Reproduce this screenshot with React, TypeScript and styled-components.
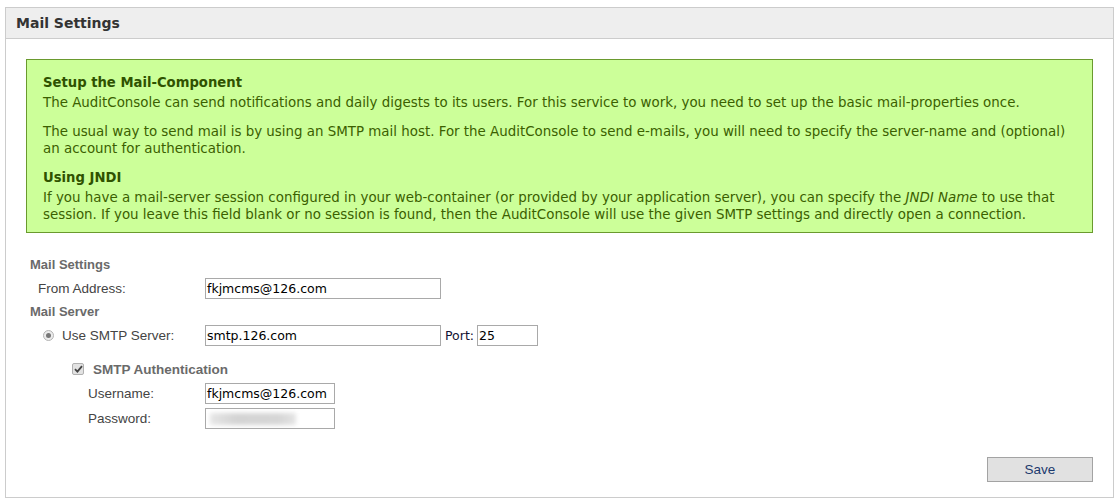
import React from 'react';
import styled, { createGlobalStyle } from 'styled-components';

const GlobalStyle = createGlobalStyle`
  html, body {
    margin: 0;
    padding: 0;
    background: #fff;
  }
`;

const Panel = styled.div`
  margin: 7px 6px 0 5px;
  height: 489px;
  border: 1px solid #cccccc;
  display: flex;
  flex-direction: column;
  font-family: 'DejaVu Sans', Verdana, sans-serif;
`;

const Header = styled.div`
  height: 30px;
  background: #eeeeee;
  border-bottom: 1px solid #cccccc;
  display: flex;
  align-items: center;
  padding-left: 10px;
  font-size: 14px;
  font-weight: bold;
  color: #333;
`;

const Body = styled.div`
  flex: 1;
  padding: 20px 20px 0 20px;
  display: flex;
  flex-direction: column;
`;

const InfoBox = styled.div`
  background: #ccff99;
  border: 1px solid #6a9a2e;
  padding: 14px 16px 9px 16px;
  color: #3b6000;
  font-size: 13.4px;
  line-height: 17px;

  h4 {
    margin: 0 0 3px 0;
    font-size: 13.2px;
    font-weight: bold;
    color: #2f5200;
  }

  p {
    margin: 0 0 12px 0;
  }

  p:last-child {
    margin-bottom: 0;
  }
`;

const Form = styled.div`
  padding-left: 4px;
  margin-top: 23px;
  font-family: 'Liberation Sans', Arial, sans-serif;
  font-size: 13.5px;
  color: #333;
  display: flex;
  flex-direction: column;
`;

const SectionLabel = styled.div<{ $top?: number }>`
  height: 18px;
  line-height: 18px;
  font-size: 13px;
  font-weight: bold;
  color: #6a6a6a;
  margin-top: ${(p) => p.$top ?? 0}px;
`;

const Row = styled.div<{ $top?: number }>`
  display: flex;
  align-items: center;
  height: 21px;
  margin-top: ${(p) => p.$top ?? 0}px;
`;

const LabelCell = styled.div<{ $indent: number }>`
  width: 175px;
  box-sizing: border-box;
  padding-left: ${(p) => p.$indent}px;
  display: flex;
  align-items: center;
  color: #444;
`;

const Field = styled.div<{ $width: number }>`
  width: ${(p) => p.$width}px;
  height: 21px;
  box-sizing: border-box;
  border: 1px solid #a9a9a9;
  padding-left: 1px;
  display: flex;
  align-items: center;
  font-family: 'DejaVu Sans', Tahoma, sans-serif;
  font-size: 12.5px;
  color: #000;
  background: #fff;
  overflow: hidden;
`;

const Blurred = styled.span`
  display: block;
  width: 86px;
  height: 12px;
  margin-left: 3px;
  background: linear-gradient(90deg, #e6e6e6, #d4d4d4 30%, #d6d6d6 80%, #e4e4e4);
  filter: blur(2px);
`;

const PortLabel = styled.span`
  font-family: 'DejaVu Sans', Tahoma, sans-serif;
  font-size: 12.5px;
  color: #111133;
  margin: 0 3px 0 4px;
`;

const Radio = styled.span`
  width: 11px;
  height: 11px;
  border-radius: 50%;
  border: 1px solid #b4b4b4;
  background: #ececec;
  box-sizing: border-box;
  display: inline-flex;
  align-items: center;
  justify-content: center;
  margin-right: 8px;

  &::after {
    content: '';
    width: 5px;
    height: 5px;
    border-radius: 50%;
    background: #777;
  }
`;

const CheckRow = styled.div`
  display: flex;
  align-items: center;
  height: 18px;
  margin-top: 14px;
  padding-left: 42px;
  font-weight: bold;
  color: #6a6a6a;
`;

const CheckBox = styled.span`
  width: 12px;
  height: 12px;
  border: 1px solid #b0b0b0;
  border-radius: 2px;
  background: #e2e2e2;
  box-sizing: border-box;
  display: inline-flex;
  align-items: center;
  justify-content: center;
  margin-right: 9px;
`;

const Footer = styled.div`
  display: flex;
  justify-content: flex-end;
  margin-top: 28px;
`;

const SaveButton = styled.button`
  width: 106px;
  height: 25px;
  background: #e1e1e1;
  border: 1px solid #a3a3a3;
  font-family: 'Liberation Sans', Arial, sans-serif;
  font-size: 13.5px;
  color: #1c3a6e;
  padding: 0;
  cursor: pointer;
`;

const App: React.FC = () => {
  return (
    <>
      <GlobalStyle />
      <Panel>
        <Header>Mail Settings</Header>
        <Body>
          <InfoBox>
            <h4>Setup the Mail-Component</h4>
            <p>
              The AuditConsole can send notifications and daily digests to its users. For this service
              to work, you need to set up the basic mail-properties once.
            </p>
            <p>
              The usual way to send mail is by using an SMTP mail host. For the AuditConsole to send
              e-mails, you will need to specify the server-name and (optional) an account for
              authentication.
            </p>
            <h4>Using JNDI</h4>
            <p>
              If you have a mail-server session configured in your web-container (or provided by your
              application server), you can specify the <em>JNDI Name</em> to use that session. If you
              leave this field blank or no session is found, then the AuditConsole will use the given
              SMTP settings and directly open a connection.
            </p>
          </InfoBox>

          <Form>
            <SectionLabel>Mail Settings</SectionLabel>
            <Row $top={4}>
              <LabelCell $indent={8}>From Address:</LabelCell>
              <Field $width={236}>fkjmcms@126.com</Field>
            </Row>
            <SectionLabel $top={4}>Mail Server</SectionLabel>
            <Row $top={4}>
              <LabelCell $indent={13}>
                <Radio />
                Use SMTP Server:
              </LabelCell>
              <Field $width={236}>smtp.126.com</Field>
              <PortLabel>Port:</PortLabel>
              <Field $width={61}>25</Field>
            </Row>
            <CheckRow>
              <CheckBox>
                <svg width="9" height="8" viewBox="0 0 9 8">
                  <path d="M1 4.2 L3.4 6.6 L8 1.2" fill="none" stroke="#444" strokeWidth="1.8" />
                </svg>
              </CheckBox>
              SMTP Authentication
            </CheckRow>
            <Row $top={5}>
              <LabelCell $indent={58}>Username:</LabelCell>
              <Field $width={130}>fkjmcms@126.com</Field>
            </Row>
            <Row $top={4}>
              <LabelCell $indent={58}>Password:</LabelCell>
              <Field $width={130}>
                <Blurred />
              </Field>
            </Row>
          </Form>

          <Footer>
            <SaveButton>Save</SaveButton>
          </Footer>
        </Body>
      </Panel>
    </>
  );
};

export default App;
